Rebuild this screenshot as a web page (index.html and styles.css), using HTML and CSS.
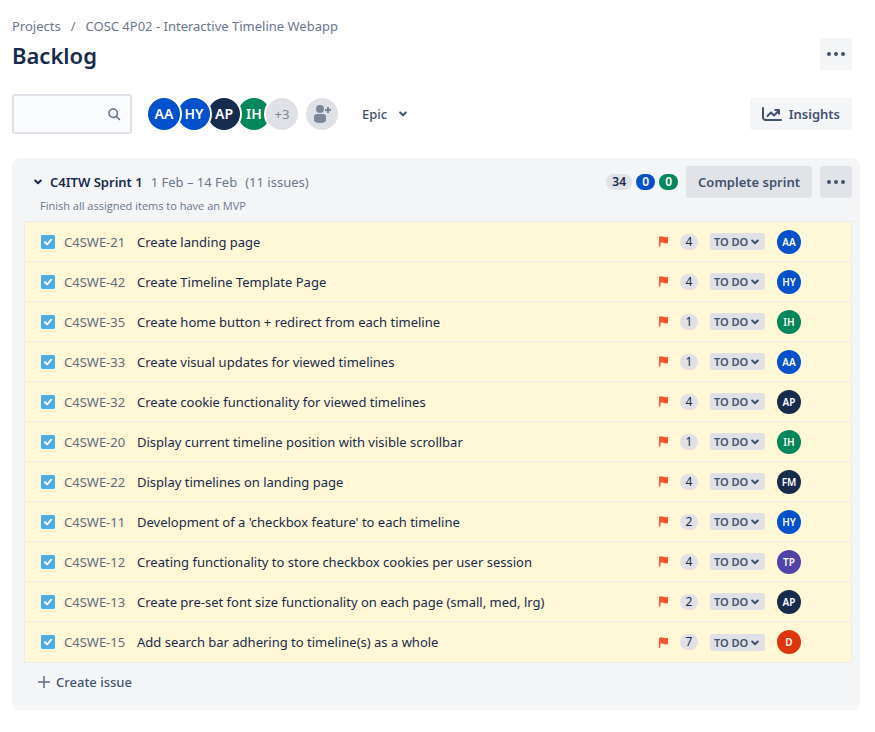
FILE: index.html
```html
<!DOCTYPE html>
<html lang="en">
<head>
<meta charset="utf-8">
<title>Backlog</title>
<link rel="stylesheet" href="styles.css">
</head>
<body>
<svg class="sprites" aria-hidden="true">
  <symbol id="chevron" viewBox="0 0 8 6"><path d="M1.200 1.500 4 4.300l2.800-2.800" fill="none" stroke="currentColor" stroke-width="2" stroke-linecap="round" stroke-linejoin="round"/></symbol>
  <symbol id="dots" viewBox="0 0 18 4"><circle cx="2" cy="2" r="2"/><circle cx="9" cy="2" r="2"/><circle cx="16" cy="2" r="2"/></symbol>
  <symbol id="task" viewBox="0 0 14 14"><rect width="14" height="14" rx="1.500" fill="#4bade8"/><path d="M4 7.200 6.200 9.400 10.200 4.700" fill="none" stroke="#fff" stroke-width="2" stroke-linecap="round" stroke-linejoin="round"/></symbol>
  <symbol id="flag" viewBox="0 0 10 11"><path d="M0 .8C1.800 0 3.200.1 4.400.7 5.800 1.400 7.200 1.300 9 .7V7C7.300 7.600 5.800 7.500 4.500 7 3.500 6.500 2.500 6.500 1.400 6.900V10.300a.7.7 0 0 1-1.400 0z" fill="#ff5630"/></symbol>
</svg>
<main class="page">
  <header class="page-header">
    <div>
      <nav class="breadcrumbs" aria-label="Breadcrumbs"><a href="#">Projects</a><span>/</span><a href="#">COSC 4P02 - Interactive Timeline Webapp</a></nav>
      <h1>Backlog</h1>
    </div>
    <button class="btn btn-light btn-icon" aria-label="More actions"><svg class="dots"><use href="#dots"/></svg></button>
  </header>

  <div class="filters">
    <label class="search">
      <input type="search" aria-label="Search backlog">
      <svg viewBox="0 0 14 14"><circle cx="6.200" cy="6.200" r="4.200"/><path d="m9.500 9.500 3 3"/></svg>
    </label>
    <div class="people">
      <span class="avatar blue">AA</span><span class="avatar blue">HY</span><span class="avatar navy">AP</span><span class="avatar green">IH</span><button class="avatar more-people">+3</button>
    </div>
    <button class="invite" aria-label="Add people"><svg viewBox="0 0 18 18"><circle cx="7" cy="4" r="4"/><path d="M1 12a3 3 0 0 1 3-3h6a3 3 0 0 1 3 3v3c0 2-2.500 3-6 3s-6-1-6-3z"/><path d="M14 2h2v2h2v2h-2v2h-2V6h-2V4h2z"/></svg></button>
    <button class="epic" aria-haspopup="true">Epic<svg class="chevron"><use href="#chevron"/></svg></button>
    <button class="btn btn-light insights"><svg viewBox="0 0 20 14"><path d="M1 1v9.500A2.500 2.500 0 0 0 3.500 13H19" stroke-linecap="round"/><path d="m5 9.500 4-4 3 3L17 3.500M12.500 3H17v4.500" stroke-linejoin="round"/></svg>Insights</button>
  </div>

  <section class="sprint">
    <div class="sprint-header">
      <button class="sprint-toggle" aria-expanded="true"><svg class="chevron"><use href="#chevron"/></svg><span>C4ITW Sprint 1</span></button>
      <span class="dates">1 Feb – 14 Feb</span>
      <span class="dates">(11 issues)</span>
      <div class="totals"><span class="total">34</span><span class="total blue">0</span><span class="total green">0</span></div>
      <button class="btn btn-gray">Complete sprint</button>
      <button class="btn btn-gray btn-icon" aria-label="Sprint actions"><svg class="dots"><use href="#dots"/></svg></button>
    </div>
    <p class="goal">Finish all assigned items to have an MVP</p>
    <ul class="issues">
      <li><svg class="task"><use href="#task"/></svg><a class="key" href="#">C4SWE-21</a><span class="summary">Create landing page</span><svg class="flag"><use href="#flag"/></svg><span class="points">4</span><span class="status"><select aria-label="Status of C4SWE-21"><option>TO DO</option></select><svg class="chevron"><use href="#chevron"/></svg></span><span class="avatar small blue">AA</span></li>
      <li><svg class="task"><use href="#task"/></svg><a class="key" href="#">C4SWE-42</a><span class="summary">Create Timeline Template Page</span><svg class="flag"><use href="#flag"/></svg><span class="points">4</span><span class="status"><select aria-label="Status of C4SWE-42"><option>TO DO</option></select><svg class="chevron"><use href="#chevron"/></svg></span><span class="avatar small blue">HY</span></li>
      <li><svg class="task"><use href="#task"/></svg><a class="key" href="#">C4SWE-35</a><span class="summary">Create home button + redirect from each timeline</span><svg class="flag"><use href="#flag"/></svg><span class="points">1</span><span class="status"><select aria-label="Status of C4SWE-35"><option>TO DO</option></select><svg class="chevron"><use href="#chevron"/></svg></span><span class="avatar small green">IH</span></li>
      <li><svg class="task"><use href="#task"/></svg><a class="key" href="#">C4SWE-33</a><span class="summary">Create visual updates for viewed timelines</span><svg class="flag"><use href="#flag"/></svg><span class="points">1</span><span class="status"><select aria-label="Status of C4SWE-33"><option>TO DO</option></select><svg class="chevron"><use href="#chevron"/></svg></span><span class="avatar small blue">AA</span></li>
      <li><svg class="task"><use href="#task"/></svg><a class="key" href="#">C4SWE-32</a><span class="summary">Create cookie functionality for viewed timelines</span><svg class="flag"><use href="#flag"/></svg><span class="points">4</span><span class="status"><select aria-label="Status of C4SWE-32"><option>TO DO</option></select><svg class="chevron"><use href="#chevron"/></svg></span><span class="avatar small navy">AP</span></li>
      <li><svg class="task"><use href="#task"/></svg><a class="key" href="#">C4SWE-20</a><span class="summary">Display current timeline position with visible scrollbar</span><svg class="flag"><use href="#flag"/></svg><span class="points">1</span><span class="status"><select aria-label="Status of C4SWE-20"><option>TO DO</option></select><svg class="chevron"><use href="#chevron"/></svg></span><span class="avatar small green">IH</span></li>
      <li><svg class="task"><use href="#task"/></svg><a class="key" href="#">C4SWE-22</a><span class="summary">Display timelines on landing page</span><svg class="flag"><use href="#flag"/></svg><span class="points">4</span><span class="status"><select aria-label="Status of C4SWE-22"><option>TO DO</option></select><svg class="chevron"><use href="#chevron"/></svg></span><span class="avatar small navy">FM</span></li>
      <li><svg class="task"><use href="#task"/></svg><a class="key" href="#">C4SWE-11</a><span class="summary">Development of a 'checkbox feature' to each timeline</span><svg class="flag"><use href="#flag"/></svg><span class="points">2</span><span class="status"><select aria-label="Status of C4SWE-11"><option>TO DO</option></select><svg class="chevron"><use href="#chevron"/></svg></span><span class="avatar small blue">HY</span></li>
      <li><svg class="task"><use href="#task"/></svg><a class="key" href="#">C4SWE-12</a><span class="summary">Creating functionality to store checkbox cookies per user session</span><svg class="flag"><use href="#flag"/></svg><span class="points">4</span><span class="status"><select aria-label="Status of C4SWE-12"><option>TO DO</option></select><svg class="chevron"><use href="#chevron"/></svg></span><span class="avatar small purple">TP</span></li>
      <li><svg class="task"><use href="#task"/></svg><a class="key" href="#">C4SWE-13</a><span class="summary">Create pre-set font size functionality on each page (small, med, lrg)</span><svg class="flag"><use href="#flag"/></svg><span class="points">2</span><span class="status"><select aria-label="Status of C4SWE-13"><option>TO DO</option></select><svg class="chevron"><use href="#chevron"/></svg></span><span class="avatar small navy">AP</span></li>
      <li><svg class="task"><use href="#task"/></svg><a class="key" href="#">C4SWE-15</a><span class="summary">Add search bar adhering to timeline(s) as a whole</span><svg class="flag"><use href="#flag"/></svg><span class="points">7</span><span class="status"><select aria-label="Status of C4SWE-15"><option>TO DO</option></select><svg class="chevron"><use href="#chevron"/></svg></span><span class="avatar small red">D</span></li>
    </ul>
    <button class="create"><svg viewBox="0 0 12 12"><path d="M6 0v12M0 6h12"/></svg>Create issue</button>
  </section>
</main>
</body>
</html>
```
FILE: styles.css
```css
* { box-sizing: border-box; }
body { margin: 0; background: #fff; color: #172b4d; font: 13px/20px "Noto Sans", "Open Sans", sans-serif; }
button, input, select { font: inherit; color: inherit; border: 0; margin: 0; padding: 0; background: none; }
button { cursor: pointer; }
a { color: inherit; text-decoration: none; }
svg { display: block; flex: none; }
.sprites { position: absolute; width: 0; height: 0; }
.blue { background: #0052cc; }
.navy { background: #172b4d; }
.green { background: #00875a; }
.purple { background: #5243aa; }
.red { background: #de350b; }
.chevron { width: 8px; height: 6px; }
.dots { width: 18px; height: 4px; fill: #42526e; }

.page { padding: 16px 15px 22px 12px; }
.page-header { display: flex; justify-content: space-between; align-items: flex-end; padding-right: 8px; }
.breadcrumbs { display: flex; gap: 10px; color: #6b778c; }
h1 { margin: 4px 0 0; font-size: 22px; line-height: 30px; font-weight: 600; }

.btn { display: flex; align-items: center; justify-content: center; height: 32px; padding: 0 12px; border-radius: 3px; font-weight: 600; color: #42526e; }
.btn-light { background: #f4f5f7; }
.btn-gray { background: #e1e3e8; }
.btn-icon { width: 32px; padding: 0; }

.filters { display: flex; align-items: center; margin: 24px 8px 24px 0; }
.search { display: flex; align-items: center; width: 120px; height: 40px; padding: 0 9px 0 6px; border: 2px solid #dfe1e6; border-radius: 3px; background: #fafbfc; }
.search input { flex: 1; min-width: 0; outline: 0; }
.search svg { width: 14px; height: 14px; fill: none; stroke: #5e6c84; stroke-width: 1.500; stroke-linecap: round; }
.avatar { display: flex; align-items: center; justify-content: center; flex: none; width: 32px; height: 32px; border-radius: 50%; color: #fff; font-size: 14px; font-weight: 600; }
.people { display: flex; margin-left: 16px; }
.people .avatar { position: relative; box-shadow: 0 0 0 2px #fff; }
.people .avatar + .avatar { margin-left: -2px; }
.people .avatar:nth-child(1) { z-index: 4; }
.people .avatar:nth-child(2) { z-index: 3; }
.people .avatar:nth-child(3) { z-index: 2; }
.people .avatar:nth-child(4) { z-index: 1; }
.people .avatar.more-people { z-index: 5; margin-left: -4px; background: #dfe1e6; color: #7a869a; font-size: 13px; font-weight: 400; }
.invite { display: flex; align-items: center; justify-content: center; width: 32px; height: 32px; margin-left: 8px; border-radius: 50%; background: #dfe1e6; }
.invite svg { width: 18px; height: 18px; fill: #7a869a; }
.epic { display: flex; align-items: center; gap: 12px; margin-left: 24px; font-weight: 500; color: #42526e; }
.insights { gap: 7px; margin-left: auto; }
.insights svg { width: 20px; height: 14px; fill: none; stroke: #42526e; stroke-width: 2; }

.sprint { padding: 8px 8px 16px 12px; border-radius: 8px; background: #f4f5f7; }
.sprint-header { display: flex; align-items: center; gap: 8px; padding-left: 10px; }
.sprint-toggle { display: flex; align-items: center; gap: 8px; font-weight: 600; }
.dates { color: #6b778c; }
.totals { display: flex; gap: 4px; margin-left: auto; }
.total { min-width: 19px; padding: 0 6px; border-radius: 8px; font-size: 12px; line-height: 16px; font-weight: 600; text-align: center; }
.total:not(.blue, .green) { background: #dfe1e6; }
.total.blue, .total.green { color: #fff; }
.goal { margin: 0 0 7px 16px; font-family: "Open Sans", "Noto Sans", sans-serif; font-size: 11px; line-height: 16px; color: #6b778c; }

.issues { margin: 0; padding: 0; list-style: none; border: 1px solid #ebecf0; background: #fff7d6; }
.issues li { display: flex; align-items: center; height: 40px; padding: 0 50px 0 16px; border-bottom: 1px solid #ebecf0; }
.issues li:last-child { border-bottom: 0; }
.task { width: 14px; height: 14px; }
.key { flex: none; width: 64px; margin: 0 9px; color: #5e6c84; }
.summary { flex: 1; min-width: 0; overflow: hidden; white-space: nowrap; text-overflow: ellipsis; }
.flag { width: 10px; height: 11px; margin-right: 11px; }
.points { width: 18px; margin-right: 12px; border-radius: 8px; background: #dfe1e6; font-size: 12px; line-height: 16px; text-align: center; }
.status { position: relative; display: flex; margin-right: 12px; color: #42526e; }
.status select { width: 55px; height: 17px; padding-left: 4px; border-radius: 3px; background: #dfe1e6; appearance: none; font-size: 11px; line-height: 17px; font-weight: 600; }
.status .chevron { position: absolute; right: 6px; top: 6px; pointer-events: none; }
.avatar.small { width: 24px; height: 24px; font-size: 10px; }
.create { display: flex; align-items: center; gap: 6px; margin: 9px 0 2px 14px; font-weight: 500; color: #42526e; }
.create svg { width: 12px; height: 12px; stroke: #5e6c84; stroke-width: 1.500; }
```
